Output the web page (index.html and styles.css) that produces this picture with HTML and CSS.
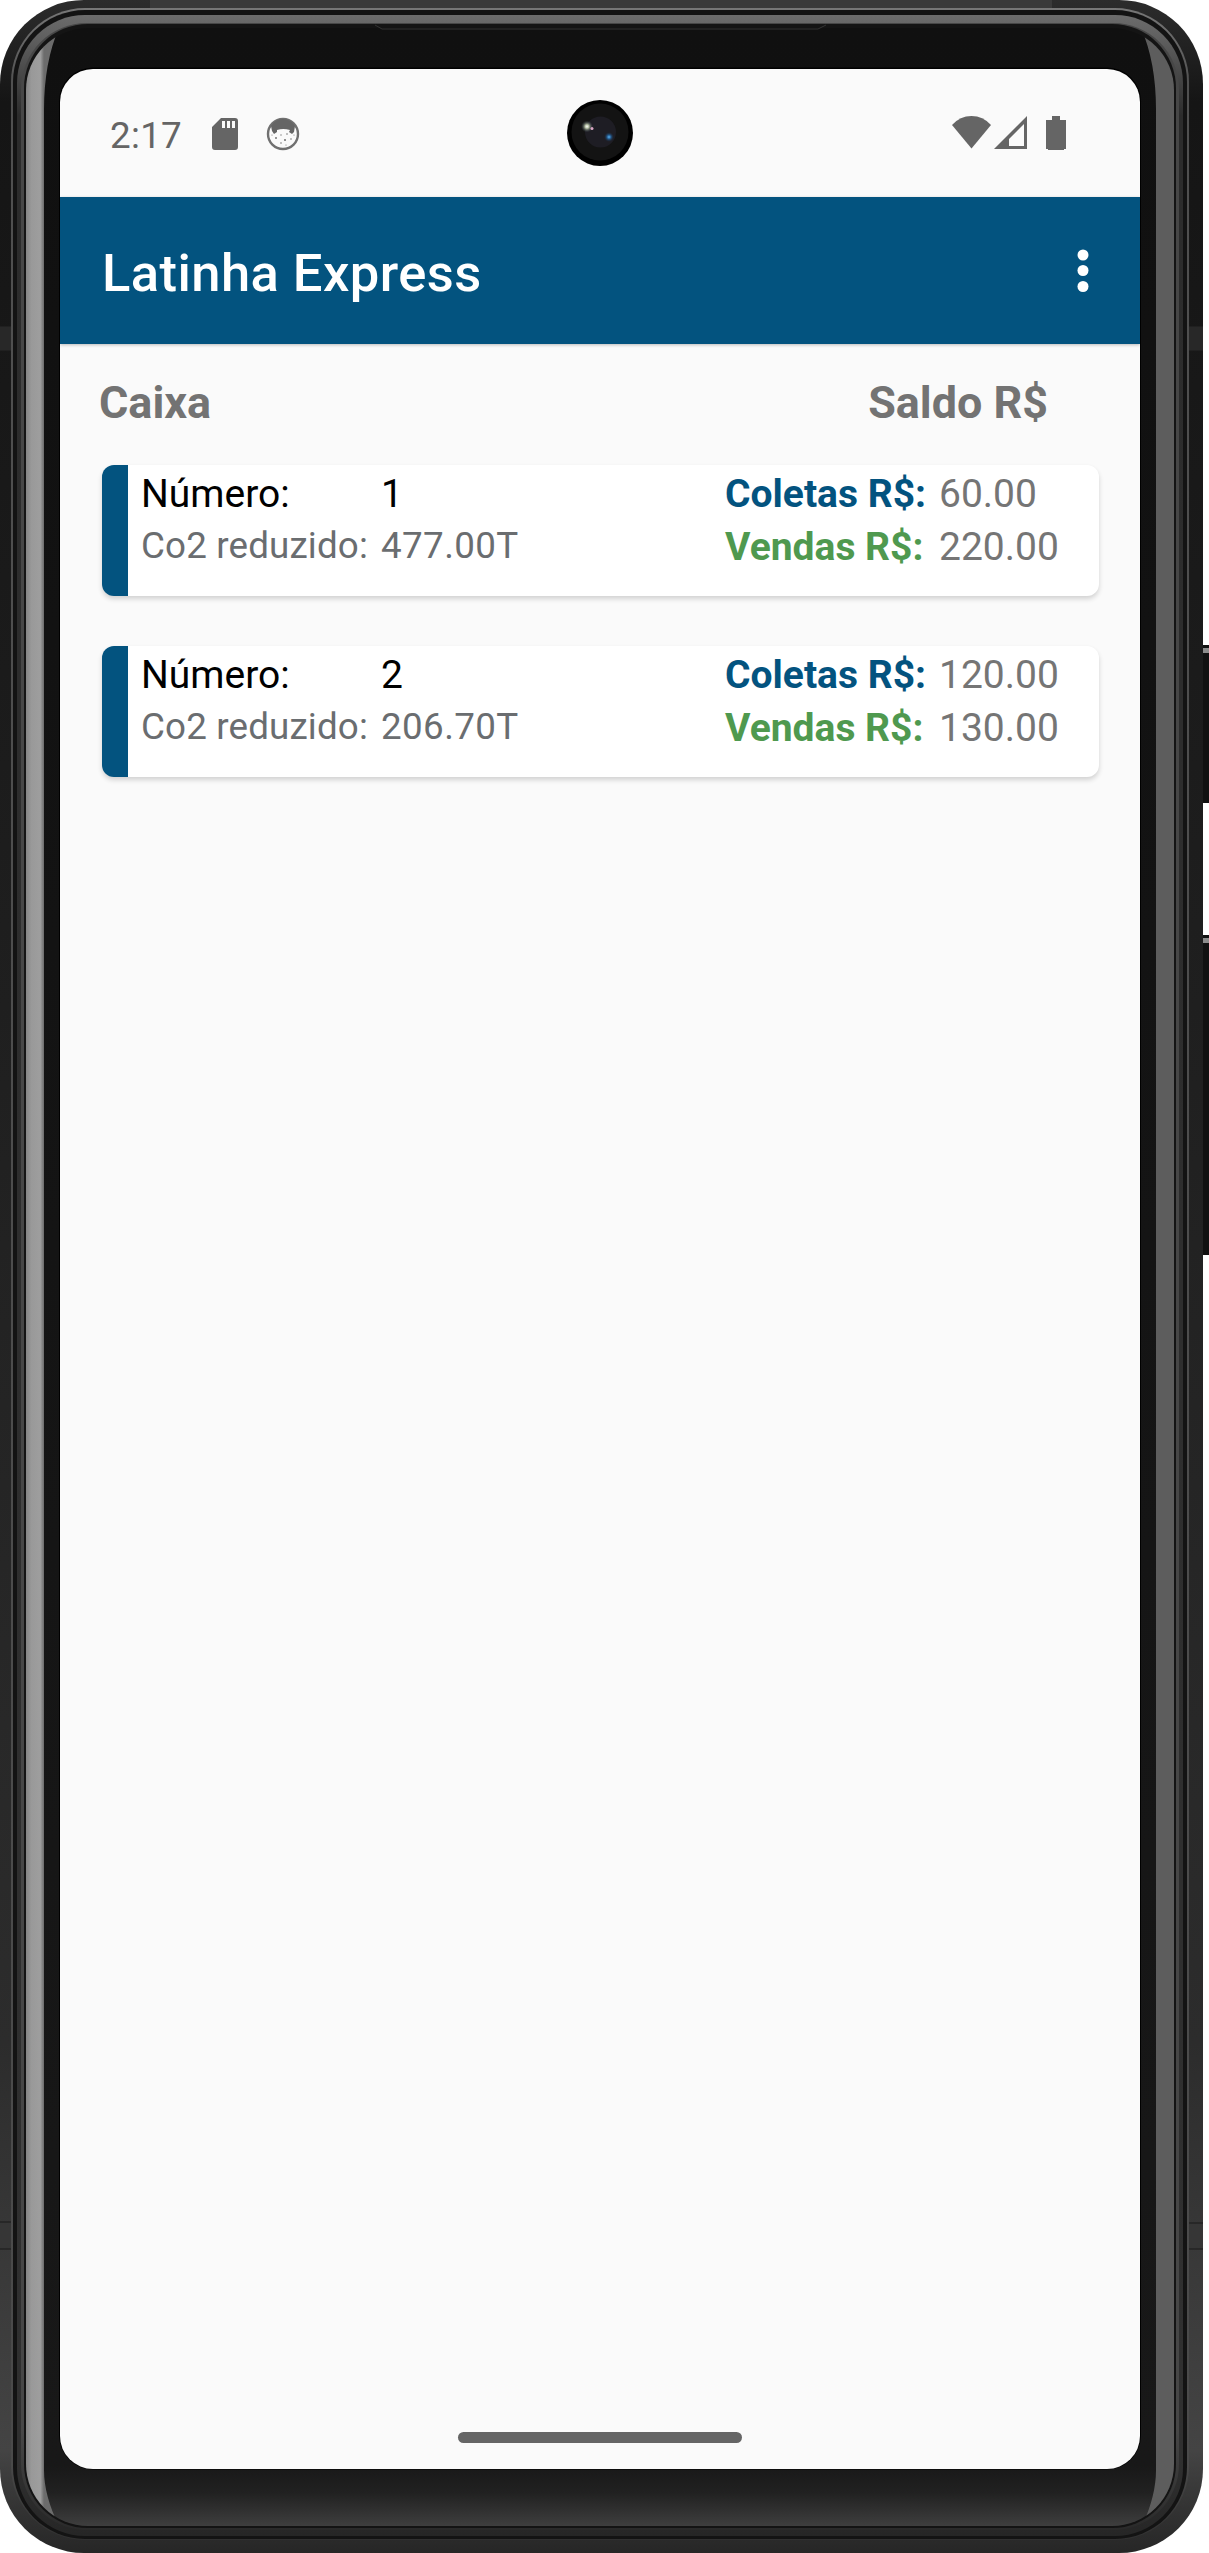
FILE: index.html
```html
<!DOCTYPE html>
<html lang="pt-BR">
<head>
<meta charset="utf-8">
<title>Latinha Express</title>
<link rel="stylesheet" href="styles.css">
</head>
<body>
<div class="device">
  <svg class="frame" width="1209" height="2553" viewBox="0 0 1209 2553" aria-hidden="true">
    <defs>
      <linearGradient id="body" x1="0" y1="0" x2="0" y2="1">
        <stop offset="0" stop-color="#2c2c2c"/><stop offset=".04" stop-color="#151515"/><stop offset=".3" stop-color="#1c1c1c"/><stop offset=".8" stop-color="#2c2c2c"/><stop offset=".96" stop-color="#444"/><stop offset="1" stop-color="#262626"/>
      </linearGradient>
      <linearGradient id="rim" x1="0" y1="0" x2="0" y2="1">
        <stop offset="0" stop-color="#777"/><stop offset=".03" stop-color="#505050"/><stop offset=".97" stop-color="#4a4a4a"/><stop offset="1" stop-color="#303030"/>
      </linearGradient>
      <linearGradient id="bevel" x1="0" y1="0" x2="0" y2="1">
        <stop offset="0" stop-color="#6c6c6c"/><stop offset=".01" stop-color="#5e5e5e"/><stop offset=".04" stop-color="#2c2c2c"/><stop offset=".97" stop-color="#303030"/><stop offset="1" stop-color="#262626"/>
      </linearGradient>
      <linearGradient id="ridge" x1="0" y1="0" x2="0" y2="1">
        <stop offset="0" stop-color="#474747"/><stop offset=".96" stop-color="#474747"/><stop offset="1" stop-color="#2a2a2a"/>
      </linearGradient>
      <linearGradient id="left" x1="26" y1="0" x2="44" y2="0" gradientUnits="userSpaceOnUse">
        <stop offset="0" stop-color="#858585"/><stop offset=".3" stop-color="#999"/><stop offset=".8" stop-color="#9e9e9e"/><stop offset="1" stop-color="#6c6c6c"/>
      </linearGradient>
      <linearGradient id="glass" x1="0" y1="26" x2="0" y2="2528" gradientUnits="userSpaceOnUse">
        <stop offset="0" stop-color="#101010"/><stop offset=".975" stop-color="#181818"/><stop offset=".986" stop-color="#212121"/><stop offset="1" stop-color="#404040"/>
      </linearGradient>
      <clipPath id="inner"><rect x="26" y="28" width="1148" height="2498" rx="62"/></clipPath>
    </defs>
    <rect x="1200" y="645" width="12" height="158" rx="3" fill="#111"/>
    <rect x="1203" y="648" width="6" height="5" fill="#8c8c8c"/>
    <rect x="1200" y="935" width="12" height="320" rx="3" fill="#111"/>
    <rect x="1203" y="938" width="6" height="5" fill="#8c8c8c"/>
    <rect width="1203" height="2553" rx="84" fill="url(#body)"/>
    <path d="M150 0H1052V9H150Z" fill="#3a3a3a"/>
    <path d="M0 326H12V351H0ZM1189 326H1203V351H1189Z" fill="#282828"/>
    <path d="M0 2222H11V2249H0ZM1189 2223H1203V2249H1189Z" fill="#363636"/>
    <path d="M0 326H12M0 351H12M1189 326H1203M1189 351H1203M0 2222H11M0 2249H11M1189 2223H1203M1189 2249H1203" stroke="#181818"/>
    <rect x="11" y="8" width="1178" height="2532" rx="74" fill="url(#rim)"/>
    <rect x="13" y="10" width="1174" height="2529" rx="72" fill="#131313"/>
    <rect x="17" y="15" width="1166" height="2521" rx="68" fill="url(#bevel)"/>
    <rect x="21" y="23" width="1158" height="2507" rx="66" fill="url(#ridge)"/>
    <rect x="24" y="24" width="1152" height="2504" rx="64" fill="#141414"/>
    <rect x="26" y="28" width="1148" height="2498" rx="62" fill="url(#glass)"/>
    <g clip-path="url(#inner)">
      <path d="M26 28H59Q44 62 44 110V2470Q44 2496 59 2526H26Z" fill="url(#left)"/>
      <path d="M1174 28H1141Q1156 62 1156 110V2470Q1156 2496 1142 2526H1174Z" fill="#5d5d5d"/>
    </g>
    <path d="M375 25L382 29H818L826 25" fill="none" stroke="#333"/>
    <rect x="59" y="67.500" width="1082" height="2402" rx="34" fill="#000"/>
  </svg>
  <main class="screen">
    <header class="status">
      <span class="clock">2:17</span>
      <svg class="sd" width="26" height="32" viewBox="0 0 26 32"><path fill="#656565" fill-rule="evenodd" d="M9 0H23Q26 0 26 3V29Q26 32 23 32H3Q0 32 0 29V9ZM10 3V10H13V3ZM15 3V10H18V3ZM20 3V10H23V3Z"/></svg>
      <svg class="bug" width="34" height="34" viewBox="0 0 34 34"><circle cx="17" cy="17" r="15" fill="#fafafa" stroke="#707070" stroke-width="2.400"/><path fill="#656565" d="M5 9Q9 2 17 2T29 9L28 15 26 17 23 15 24 13Q17 11 11 13L11 15 8 17 6 14Z"/><g fill="#777"><circle cx="10" cy="21" r="1"/><circle cx="19" cy="23" r="1.100"/><circle cx="21" cy="17" r=".8"/><circle cx="15" cy="18" r=".7"/><circle cx="25" cy="22" r=".8"/><circle cx="15" cy="26" r=".8"/><circle cx="20" cy="28" r=".6"/><circle cx="6" cy="18" r=".6"/><circle cx="28" cy="18" r=".6"/></g></svg>
      <svg class="camera" width="66" height="66" viewBox="0 0 66 66"><defs><radialGradient id="flare"><stop offset="0" stop-color="#fff"/><stop offset=".3" stop-color="#b9c4a8"/><stop offset="1" stop-color="#34404a" stop-opacity="0"/></radialGradient><radialGradient id="blue"><stop offset="0" stop-color="#5ab4f4"/><stop offset=".4" stop-color="#24598c"/><stop offset="1" stop-color="#1c2636" stop-opacity="0"/></radialGradient></defs><circle cx="33" cy="33" r="33"/><circle cx="33" cy="32" r="28.500" fill="#131313"/><circle cx="33.500" cy="32" r="15.500" fill="#1e1d24"/><circle cx="20" cy="26.500" r="6" fill="url(#flare)"/><circle cx="25" cy="28.500" r="1.500" fill="#d9a6c4"/><circle cx="42" cy="37" r="5" fill="url(#blue)"/></svg>
      <svg class="signals" width="114" height="34" viewBox="0 0 114 34"><g fill="#656565"><path d="M0 9Q8 0 19.500 0T39 9L19.500 32.500Z"/><path fill-rule="evenodd" d="M42 33L75 0V33ZM57 30H72V8L57 23Z"/><path d="M100 0H108V4H114V33H112V34H96V33H94V4H100Z"/></g></svg>
    </header>
    <nav class="appbar">
      <h1 class="title">Latinha Express</h1>
      <svg class="more" width="12" height="44" viewBox="0 0 12 44"><g fill="#fff"><circle cx="6" cy="6" r="5.500"/><circle cx="6" cy="21.500" r="5.500"/><circle cx="6" cy="37.500" r="5.500"/></g></svg>
    </nav>
    <section class="content">
      <div class="heading"><h2 class="label">Caixa</h2><h2 class="label">Saldo R$</h2></div>
      <article class="card">
        <dl class="info"><dt class="num">Número:</dt><dd class="num">1</dd><dt class="co2">Co2 reduzido:</dt><dd class="co2 amount">477.00T</dd></dl>
        <dl class="money"><dt class="buy">Coletas R$:</dt><dd>60.00</dd><dt class="sell">Vendas R$:</dt><dd>220.00</dd></dl>
      </article>
      <article class="card">
        <dl class="info"><dt class="num">Número:</dt><dd class="num">2</dd><dt class="co2">Co2 reduzido:</dt><dd class="co2 amount">206.70T</dd></dl>
        <dl class="money"><dt class="buy">Coletas R$:</dt><dd>120.00</dd><dt class="sell">Vendas R$:</dt><dd>130.00</dd></dl>
      </article>
    </section>
    <footer class="gesture"><div class="pill"></div></footer>
  </main>
</div>
</body>
</html>
```
FILE: styles.css
```css
* { box-sizing: border-box; margin: 0; padding: 0; }
html, body { width: 1209px; height: 2553px; overflow: hidden; background: #fff; }
body { font-family: Roboto, sans-serif; }
svg { display: block; flex: none; }
.device { display: grid; width: 1209px; height: 2553px; }
.frame, .screen { grid-area: 1 / 1; }
.screen { width: 1080px; height: 2400px; margin: 69px 0 0 60px; border-radius: 33px; overflow: hidden; background: #fafafa; display: flex; flex-direction: column; }
.status { height: 128px; display: flex; align-items: flex-start; padding: 0 54px 0 50px; flex: none; }
.clock { font-size: 36.75px; line-height: 44px; letter-spacing: .3px; color: #656565; width: 102px; margin-top: 45px; }
.sd { margin-top: 48.5px; }
.bug { margin: 48px 0 0 28px; }
.camera { margin: 31px 0 0 267px; }
.signals { margin: 47px 20px 0 auto; }
.appbar { height: 147px; flex: none; background: #03537f; display: flex; justify-content: space-between; align-items: flex-start; padding: 0 51px 0 42px; box-shadow: 0 1px 3px rgba(0,0,0,.25); }
.title { font-size: 52.5px; font-weight: 500; letter-spacing: .45px; line-height: 62px; color: #fff; margin-top: 45px; }
.more { margin-top: 52px; }
.content { flex: 1; padding: 0 41px 0 42px; }
.heading { display: flex; justify-content: space-between; height: 121px; padding: 32px 51px 0 0; margin-left: -3px; }
.label { font-size: 44.9px; line-height: 54px; color: #737373; font-weight: 700; }
.card { height: 131px; margin-bottom: 50px; display: flex; justify-content: space-between; background: #fff; border-left: 26px solid #03537f; border-radius: 12px; box-shadow: 0 3px 5px rgba(0,0,0,.16); padding: 2px 0 0 13px; }
.info, .money { display: grid; align-content: start; }
.info { grid-template-columns: 240px auto; grid-template-rows: 53px 52px; }
.money { grid-template-columns: 214px 160px; grid-template-rows: 53px 53px; font-size: 39px; line-height: 54px; }
.num { font-size: 39px; line-height: 54px; color: #000; }
.co2 { font-size: 36.75px; letter-spacing: .15px; line-height: 52px; color: #6a6d70; }
.amount { letter-spacing: .4px; }
.money dd { color: #757575; }
.buy { color: #03537f; font-weight: 700; }
.sell { color: #4f994f; font-weight: 700; }
.gesture { height: 37px; flex: none; display: flex; justify-content: center; }
.pill { width: 284px; height: 11px; border-radius: 6px; background: #656565; }
```
